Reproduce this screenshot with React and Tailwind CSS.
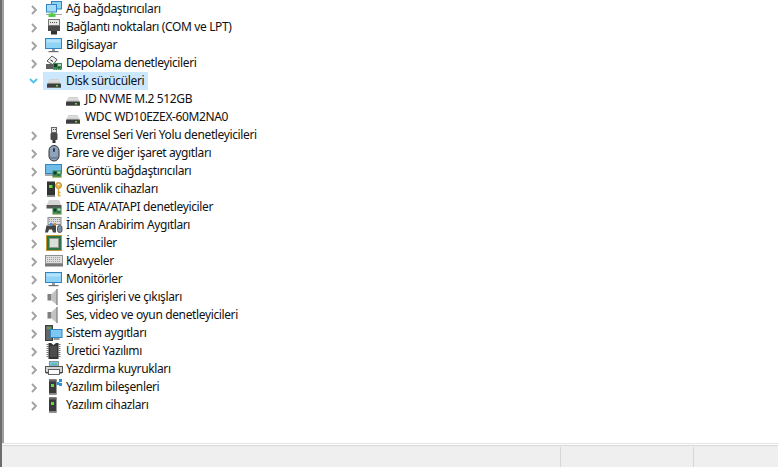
const pcb = (x = 7, y = 9) => (
  <g transform={`translate(${x} ${y})`}>
    <rect x="0" y="0" width="9" height="7" fill="#3c8a55" />
    <rect x="1" y="1" width="3" height="3" fill="#173f28" />
    <rect x="5" y="1" width="3" height="2" fill="#a9dab2" />
    <rect x="5" y="4" width="2" height="1" fill="#1f4f33" />
    <path d="M0 6.5h9" stroke="#d6b03c" strokeDasharray="1 1" />
  </g>
);
const drive = (
  <g>
    <path d="M3.5 6h9l2.5 5H1z" fill="#cfcfcf" />
    <path d="M3 8h10" stroke="#e6e6e6" />
    <rect x="1" y="10.5" width="14" height="4.5" rx="1" fill="#3d3d3d" />
    <rect x="1" y="14" width="14" height="1" fill="#707070" />
    <rect x="10" y="12" width="2" height="1.5" fill="#5fdc3c" />
  </g>
);
const monitor = (
  <g>
    <rect x="-0.5" y="1.5" width="16" height="10" fill="#8fd3f7" stroke="#2f86c2" />
    <rect x="0.5" y="2.5" width="14" height="3" fill="#b5e3fb" />
    <rect x="6" y="12" width="3" height="2" fill="#9a9a9a" />
    <rect x="2.5" y="14" width="10" height="1.2" fill="#6d6d6d" />
  </g>
);
const speaker = (
  <g>
    <rect x="1.5" y="5" width="4" height="6.5" fill="#7f7f7f" />
    <path d="M5.5 5L11 0v16l-5.5-4.5z" fill="#c2c2c2" />
    <path d="M11 0v16" stroke="#8a8a8a" strokeWidth="1.4" />
  </g>
);
const tower = (
  <g>
    <rect x="3" y="0.5" width="7.5" height="15" fill="#3a3a3a" />
    <rect x="3" y="0.5" width="7.5" height="2" fill="#666" />
    <rect x="3" y="14" width="7.5" height="1.5" fill="#888" />
    <rect x="5" y="5" width="3" height="3" fill="#5fdc3c" />
  </g>
);

const icons = {
  network: (
    <g>
      <rect x="5.5" y="0.5" width="10" height="7.5" fill="#8fd3f7" stroke="#2f86c2" />
      <rect x="0.5" y="3.5" width="10" height="7.5" fill="#a5dcf9" stroke="#2f86c2" />
      <rect x="0" y="13" width="16" height="1" fill="#a8a8a8" />
      <path d="M5 11.5h2v1h2.5v3.5h-7v-3.5H5z" fill="#58c94a" />
    </g>
  ),
  port: (
    <g>
      <rect x="2.5" y="0.5" width="11" height="6" fill="#e6e6e6" stroke="#777" />
      <path d="M4 3.5h8" stroke="#555" strokeDasharray="1 1" />
      <rect x="2" y="7" width="12" height="5" fill="#4a4a4a" />
      <rect x="5" y="12" width="6" height="3.5" fill="#333" />
    </g>
  ),
  computer: monitor,
  storage: (
    <g>
      <path d="M1 6l5-5 5 3.5L7 10z" fill="#f2f2f2" stroke="#444" strokeWidth="0.9" />
      <path d="M4.5 5l2.5 1.5" stroke="#222" />
      <rect x="0" y="9" width="8" height="5" fill="#5f5f5f" />
      {pcb(7, 8)}
    </g>
  ),
  drive,
  usb: (
    <g>
      <rect x="5.5" y="0.5" width="5" height="5" fill="#e0e0e0" stroke="#666" />
      <rect x="7" y="2" width="1" height="1" fill="#555" />
      <rect x="9" y="2" width="1" height="1" fill="#555" />
      <rect x="4.5" y="6" width="7" height="7" rx="1" fill="#484848" />
      <rect x="6.5" y="13" width="3" height="3" fill="#333" />
    </g>
  ),
  mouse: (
    <g>
      <rect x="3" y="0.5" width="10" height="15.5" rx="5" fill="#8fa3bb" stroke="#333" />
      <rect x="7" y="3" width="2" height="4" rx="1" fill="#2f3d4e" />
      <path d="M4.5 10.5c1 2 6 2 7 0v3.5h-7z" fill="#6f8299" />
    </g>
  ),
  display: (
    <g>
      <rect x="-0.5" y="1.5" width="16" height="9" fill="#6fbce8" stroke="#2f86c2" />
      <rect x="-1" y="11" width="8" height="2" fill="#a8a8a8" />
      {pcb(6.5, 7.5)}
    </g>
  ),
  security: (
    <g>
      <rect x="1" y="0.5" width="8" height="15" fill="#333" />
      <rect x="3" y="4" width="3.5" height="3" fill="#5fdc3c" />
      <rect x="1" y="14" width="8" height="1.5" fill="#888" />
      <circle cx="12.5" cy="4.5" r="3" fill="#e8b94a" stroke="#b98a24" />
      <circle cx="12.5" cy="3.5" r="0.8" fill="#fff" />
      <path d="M12.5 7v8.5M12.5 11.5h2M12.5 14.5h2" stroke="#d9a93a" strokeWidth="1.5" />
    </g>
  ),
  ide: (
    <g>
      <path d="M3 1h10l2.5 5.5h-15z" fill="#d5d5d5" />
      <rect x="0.5" y="6" width="15" height="3.5" fill="#555" />
      {pcb(6.5, 8.5)}
    </g>
  ),
  human: (
    <g>
      <rect x="2" y="0.5" width="13" height="7" fill="#dcdcdc" stroke="#8a8a8a" />
      <path d="M3 2.5h11M3 4.5h11" stroke="#999" strokeDasharray="1 1" />
      <path d="M-1 15.5l1.5-7h5.5l2-1 2 1v7H7L6 12.5H3l-1 3z" fill="#444" />
      <rect x="4" y="6" width="2.5" height="2.5" fill="#3b8be0" />
      <rect x="7.5" y="6" width="2.5" height="2.5" fill="#e08a30" />
      <rect x="11.5" y="8.5" width="4.5" height="7" rx="2" fill="#7d8fa5" stroke="#333" strokeWidth="0.7" />
    </g>
  ),
  cpu: (
    <g>
      <rect x="0" y="0" width="16" height="16" fill="#c49a30" />
      <rect x="1" y="1" width="14" height="14" fill="#2c7446" />
      <rect x="3.5" y="3.5" width="9" height="9" fill="#dcdfd8" stroke="#8f998f" />
    </g>
  ),
  keyboard: (
    <g>
      <rect x="-0.5" y="2.5" width="17" height="8" fill="#dedede" stroke="#909090" />
      <path d="M1 4.5h14M1 6.5h14M1 8.5h14" stroke="#a0a0a0" strokeDasharray="1 1" />
      <rect x="-1" y="11" width="18" height="2.5" fill="#777" />
    </g>
  ),
  speaker,
  system: (
    <g>
      <rect x="-0.5" y="0.5" width="7" height="15" fill="#666" stroke="#3e3e3e" />
      <rect x="1" y="2.5" width="4" height="1" fill="#5fdc3c" />
      <rect x="4.5" y="4.5" width="11.5" height="8" fill="#7cc8f2" stroke="#2f86c2" />
      <rect x="7.5" y="13" width="6" height="2" fill="#999" />
    </g>
  ),
  firmware: (
    <g>
      <path d="M1.5 1v14M13.5 1v14" stroke="#777" strokeDasharray="1 1" strokeWidth="2" />
      <path d="M2.5 0H5l2.5 2L10 0h2.5v16h-10z" fill="#333" />
      <rect x="4" y="3" width="7" height="11" fill="#4c4c4c" />
    </g>
  ),
  printer: (
    <g>
      <rect x="3.5" y="0.5" width="9" height="4.5" fill="#7cc8f2" stroke="#777" strokeWidth="0.7" />
      <path d="M5 3h6" stroke="#4fb85a" />
      <rect x="-0.5" y="5.5" width="17" height="6" fill="#d5d5d5" stroke="#555" />
      <rect x="2.5" y="8.5" width="11" height="5" fill="#fafafa" stroke="#555" strokeWidth="0.9" />
      <rect x="0" y="11" width="2.5" height="1.5" fill="#444" />
      <rect x="13.5" y="11" width="2.5" height="1.5" fill="#444" />
    </g>
  ),
  component: (
    <g>
      {tower}
      <rect x="10.5" y="3" width="3" height="3" fill="#2f8fd8" />
      <rect x="13" y="0" width="3" height="3" fill="#2f8fd8" />
      <rect x="13" y="4" width="3" height="3" fill="#2f8fd8" />
    </g>
  ),
  device: tower,
};

const Icon = ({ name }) => (
  <svg width="16" height="16" viewBox="0 0 16 16" className="shrink-0 overflow-visible">
    {icons[name]}
  </svg>
);

const Chevron = ({ open }) => (
  <span className="w-[13px] h-[18px] flex items-center shrink-0">
    {open ? (
      <svg width="9" height="6" viewBox="0 0 9 6" className="ml-[-1px]">
        <path d="M1 1l3.5 3.5L8 1" fill="none" stroke="#4cc2e8" strokeWidth="1.8" />
      </svg>
    ) : (
      <svg width="6" height="10" viewBox="0 0 6 10" className="ml-[1px] mt-[1px]">
        <path d="M1 1l4 4-4 4" fill="none" stroke="#a0a0a0" strokeWidth="1.9" />
      </svg>
    )}
  </span>
);

const Row = ({ icon, label, open }) => (
  <div className="flex h-[18px] pl-[26px] items-center">
    <Chevron open={open} />
    <div className={`flex h-[18px] items-center pl-[3px] pr-[4px] gap-[4px] ${open ? "bg-[#cce8ff]" : ""}`}>
      <Icon name={icon} />
      <span className="whitespace-nowrap">{label}</span>
    </div>
  </div>
);

const Child = ({ label }) => (
  <div className="flex h-[18px] pl-[61px] items-center gap-[4px]">
    <Icon name="drive" />
    <span className="whitespace-nowrap">{label}</span>
  </div>
);

const before = [
  ["network", "Ağ bağdaştırıcıları"],
  ["port", "Bağlantı noktaları (COM ve LPT)"],
  ["computer", "Bilgisayar"],
  ["storage", "Depolama denetleyicileri"],
];
const after = [
  ["usb", "Evrensel Seri Veri Yolu denetleyicileri"],
  ["mouse", "Fare ve diğer işaret aygıtları"],
  ["display", "Görüntü bağdaştırıcıları"],
  ["security", "Güvenlik cihazları"],
  ["ide", "IDE ATA/ATAPI denetleyiciler"],
  ["human", "İnsan Arabirim Aygıtları"],
  ["cpu", "İşlemciler"],
  ["keyboard", "Klavyeler"],
  ["computer", "Monitörler"],
  ["speaker", "Ses girişleri ve çıkışları"],
  ["speaker", "Ses, video ve oyun denetleyicileri"],
  ["system", "Sistem aygıtları"],
  ["firmware", "Üretici Yazılımı"],
  ["printer", "Yazdırma kuyrukları"],
  ["component", "Yazılım bileşenleri"],
  ["device", "Yazılım cihazları"],
];

export default function App() {
  return (
    <div className="w-[778px] h-[467px] overflow-hidden flex flex-col bg-white border-l-2 border-[#6d6d6d] text-[12px] leading-[18px] tracking-[-0.37px] text-[#111] font-['Noto_Sans',sans-serif]">
      <div className="flex-1 border-l-2 border-[#a0a0a0]">
        {before.map(([i, l]) => (
          <Row key={l} icon={i} label={l} />
        ))}
        <Row icon="drive" label="Disk sürücüleri" open />
        <Child label="JD NVME M.2 512GB" />
        <Child label="WDC WD10EZEX-60M2NA0" />
        {after.map(([i, l]) => (
          <Row key={l} icon={i} label={l} />
        ))}
      </div>
      <div className="h-[24px] shrink-0 flex flex-col">
        <div className="h-[3px] shrink-0 bg-white border-y border-t-[#e5e5e5] border-b-[#d7d7d7]"></div>
        <div className="flex-1 flex bg-[#efefef] pt-px">
          <div className="w-[559px] border-r border-[#d7d7d7]"></div>
          <div className="w-[133px] border-r border-[#d7d7d7]"></div>
          <div className="flex-1"></div>
        </div>
      </div>
    </div>
  );
}
